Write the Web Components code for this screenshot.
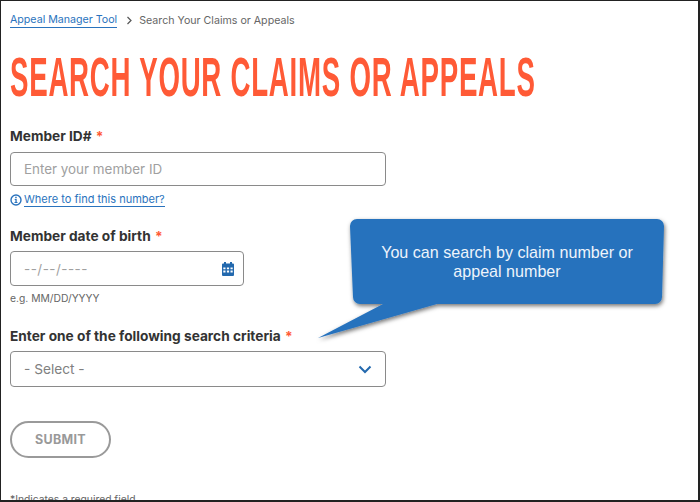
<!DOCTYPE html>
<html>
<head>
<meta charset="utf-8">
<title>Search Your Claims or Appeals</title>
<style>
  html, body { margin: 0; height: 100%; background: #fff; }
  body { font-family: "Inter", "Liberation Sans", sans-serif; }
</style>
</head>
<body>
<appeal-page>
  <app-breadcrumb link="Appeal Manager Tool" current="Search Your Claims or Appeals"></app-breadcrumb>
  <page-title>Search Your Claims or Appeals</page-title>

  <form-field label="Member ID#" style="margin-bottom:20px;--label-gap:7px">
    <text-box placeholder="Enter your member ID" width="376" height="34"></text-box>
    <help-link>Where to find this number?</help-link>
  </form-field>

  <form-field label="Member date of birth" style="margin-bottom:22px">
    <text-box placeholder="--/--/----" width="234" icon="calendar"></text-box>
    <field-hint>e.g. MM/DD/YYYY</field-hint>
  </form-field>

  <form-field label="Enter one of the following search criteria">
    <text-box placeholder="- Select -" width="376" height="36" icon="chevron"></text-box>
  </form-field>

  <submit-pill>SUBMIT</submit-pill>
  <field-hint>*Indicates a required field</field-hint>

  <call-out slot="overlay">You can search by claim number or appeal number</call-out>
</appeal-page>

<script>
class AppealPage extends HTMLElement {
  constructor() {
    super();
    const shadow = this.attachShadow({ mode: 'open' });
    shadow.innerHTML = `
      <style>
        :host {
          display: block;
          position: relative;
          width: 700px;
          height: 502px;
          box-sizing: border-box;
          border-style: solid;
          border-color: #222;
          border-width: 1px 2px 2px 1px;
          overflow: hidden;
          color: #333;
        }
        .wrap { padding: 12px 9px 0; }
      </style>
      <div class="wrap"><slot></slot></div>
      <slot name="overlay"></slot>
    `;
  }
}

class AppBreadcrumb extends HTMLElement {
  constructor() {
    super();
    const shadow = this.attachShadow({ mode: 'open' });
    shadow.innerHTML = `
      <style>
        :host { display: flex; align-items: center; font-size: 10.65px; line-height: 14px; color: #666; }
        a { color: #2a73bd; text-decoration: none; border-bottom: 1px solid #2a73bd; }
        svg { margin: 0 6px 0 9px; }
      </style>
      <a id="link"></a>
      <svg width="7" height="9" viewBox="0 0 7 9"><path d="M1.5 1L5 4.500 1.500 8" fill="none" stroke="#555" stroke-width="1.2"/></svg>
      <span id="current"></span>
    `;
  }
  connectedCallback() {
    this.shadowRoot.querySelector('#link').textContent = this.getAttribute('link');
    this.shadowRoot.querySelector('#current').textContent = this.getAttribute('current');
  }
}

// No condensed font is installed, so the heading is squeezed horizontally
class PageTitle extends HTMLElement {
  constructor() {
    super();
    const shadow = this.attachShadow({ mode: 'open' });
    shadow.innerHTML = `
      <style>
        :host { display: block; height: 52px; margin: 23px 0 24px; }
        h1 {
          display: inline-block;
          margin: 0;
          font: 700 56px/52px "Liberation Sans", Arial, sans-serif;
          letter-spacing: 1.5px;
          color: #ff5a36;
          text-transform: uppercase;
          white-space: nowrap;
          transform: scaleX(.494);
          transform-origin: left center;
        }
      </style>
      <h1><slot></slot></h1>
    `;
  }
}

class FormField extends HTMLElement {
  constructor() {
    super();
    const shadow = this.attachShadow({ mode: 'open' });
    shadow.innerHTML = `
      <style>
        :host { display: block; }
        label { display: block; font-size: 13.7px; line-height: 18px; font-weight: 700; color: #333; margin-bottom: var(--label-gap, 6px); }
        i { font-style: normal; color: #ff5a36; margin-left: 1px; }
      </style>
      <label><span id="text"></span> <i>*</i></label>
      <slot></slot>
    `;
  }
  connectedCallback() {
    this.shadowRoot.querySelector('#text').textContent = this.getAttribute('label');
  }
}

class TextBox extends HTMLElement {
  constructor() {
    super();
    const shadow = this.attachShadow({ mode: 'open' });
    shadow.innerHTML = `
      <style>
        :host { display: block; }
        .box {
          display: flex;
          align-items: center;
          justify-content: space-between;
          box-sizing: border-box;
          height: 35px;
          padding: 0 13px;
          border: 1px solid #8a8a8a;
          border-radius: 4px;
          font-size: 13.4px;
          color: #a0a0a0;
          background: #fff;
        }
        .box.calendar { padding-right: 9px; letter-spacing: .5px; }
        .box.chevron { font-size: 13.7px; color: #808080; }
        svg { display: block; }
      </style>
      <div class="box"><span id="text"></span><span id="icon"></span></div>
    `;
  }
  connectedCallback() {
    const box = this.shadowRoot.querySelector('.box');
    box.style.width = this.getAttribute('width') + 'px';
    if (this.hasAttribute('height')) box.style.height = this.getAttribute('height') + 'px';
    this.shadowRoot.querySelector('#text').textContent = this.getAttribute('placeholder');
    const icon = this.getAttribute('icon');
    const slot = this.shadowRoot.querySelector('#icon');
    if (icon) box.classList.add(icon);
    if (icon === 'calendar') {
      slot.innerHTML = `<svg width="12" height="14" viewBox="0 0 12 14"><path fill="#2369ae" fill-rule="evenodd" d="M2 0h2v1.500h4V0h2v1.500h1a1 1 0 0 1 1 1V13a1 1 0 0 1-1 1H1a1 1 0 0 1-1-1V2.500a1 1 0 0 1 1-1h1zM1.300 5.500v1.800h2.200V5.500zm3.600 0v1.800h2.200V5.500zm3.600 0v1.800h2.200V5.500zM1.300 8.600v1.800h2.200V8.600zm3.600 0v1.800h2.200V8.600zm3.600 0v1.800h2.200V8.600z"/></svg>`;
    } else if (icon === 'chevron') {
      slot.innerHTML = `<svg width="14" height="9" viewBox="0 0 14 9"><path d="M1.500 1.500L7 7l5.500-5.500" fill="none" stroke="#2369ae" stroke-width="2"/></svg>`;
    }
  }
}

class HelpLink extends HTMLElement {
  constructor() {
    super();
    const shadow = this.attachShadow({ mode: 'open' });
    shadow.innerHTML = `
      <style>
        :host { display: flex; align-items: center; gap: 2px; margin-top: 6px; font-size: 11px; line-height: 14px; color: #2a73bd; }
        a { border-bottom: 1px solid #2a73bd; }
      </style>
      <svg width="12" height="12" viewBox="0 0 12 12"><circle cx="6" cy="6" r="5" fill="none" stroke="#2a73bd" stroke-width="1.4"/><path d="M5.200 2.700h1.500v1.500H5.200zM4.700 5h2v3h.8v1H4.500V8h.9V6h-.7z" fill="#2a73bd"/></svg>
      <a><slot></slot></a>
    `;
  }
}

class FieldHint extends HTMLElement {
  constructor() {
    super();
    const shadow = this.attachShadow({ mode: 'open' });
    shadow.innerHTML = `
      <style>
        :host { display: block; margin-top: 5px; font-size: 10.3px; line-height: 14px; color: #666; }
      </style>
      <slot></slot>
    `;
  }
}

class SubmitPill extends HTMLElement {
  constructor() {
    super();
    const shadow = this.attachShadow({ mode: 'open' });
    shadow.innerHTML = `
      <style>
        :host { display: block; margin: 34px 0 34px; }
        button {
          display: block;
          box-sizing: border-box;
          width: 101px;
          height: 37px;
          padding: 0;
          border: 2px solid #9a9a9a;
          border-radius: 19px;
          background: #fff;
          color: #999;
          font: 700 12.5px "Inter", "Liberation Sans", sans-serif;
          letter-spacing: .3px;
        }
      </style>
      <button><slot></slot></button>
    `;
  }
}

class CallOut extends HTMLElement {
  constructor() {
    super();
    const shadow = this.attachShadow({ mode: 'open' });
    shadow.innerHTML = `
      <style>
        :host { position: absolute; left: 317px; top: 217px; width: 352px; height: 125px; display: block; }
        svg { position: absolute; inset: 0; overflow: visible; }
        .text {
          position: absolute;
          left: 49px;
          top: 25px;
          width: 280px;
          text-align: center;
          color: #eef4fb;
          font: 16.1px/19px "Liberation Sans", Arial, sans-serif;
        }
      </style>
      <svg width="352" height="125" viewBox="0 0 352 125">
        <defs>
          <filter id="sh" x="-10%" y="-10%" width="120%" height="130%">
            <feDropShadow dx="1" dy="2" stdDeviation="2" flood-color="#000" flood-opacity=".55"/>
          </filter>
        </defs>
        <path filter="url(#sh)" fill="#2672bd" d="M39 1H339a7 7 0 0 1 7 7L344 79a7 7 0 0 1-7 7H119L0 120 65 86H42a7 7 0 0 1-7-7L32 8a7 7 0 0 1 7-7z"/>
      </svg>
      <div class="text"><slot></slot></div>
    `;
  }
}

customElements.define('appeal-page', AppealPage);
customElements.define('app-breadcrumb', AppBreadcrumb);
customElements.define('page-title', PageTitle);
customElements.define('form-field', FormField);
customElements.define('text-box', TextBox);
customElements.define('help-link', HelpLink);
customElements.define('field-hint', FieldHint);
customElements.define('submit-pill', SubmitPill);
customElements.define('call-out', CallOut);
</script>
</body>
</html>
